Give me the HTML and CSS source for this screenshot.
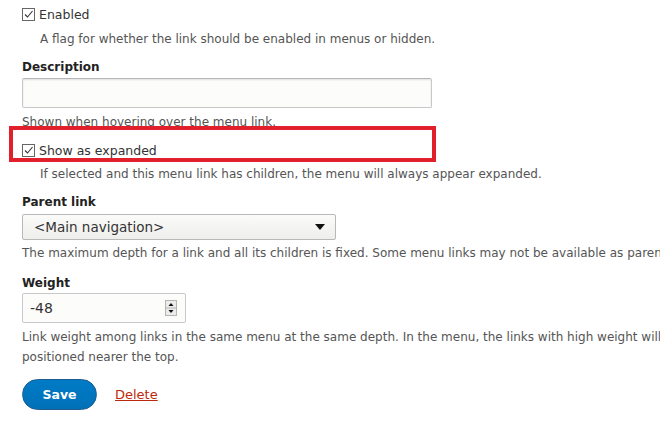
FILE: index.html
```html
<!DOCTYPE html>
<html>
<head>
<meta charset="utf-8">
<link rel="stylesheet" href="styles.css">
</head>
<body>
<form class="form">
  <div class="item item-check">
    <label class="check-row">
      <svg class="checkbox" width="13" height="13" viewBox="0 0 13 13"><rect x="0.5" y="0.5" width="12" height="12" fill="#fff" stroke="#666"/><path d="M3 6.5 L5.5 9 L10.5 3" fill="none" stroke="#333" stroke-width="1.1"/></svg>
      <span>Enabled</span>
    </label>
    <div class="desc desc-indent desc-first">A flag for whether the link should be enabled in menus or hidden.</div>
  </div>

  <div class="item item-desc">
    <div class="label">Description</div>
    <div class="text-input"></div>
    <div class="desc desc-tight">Shown when hovering over the menu link.</div>
  </div>

  <div class="item item-check item-expanded">
    <label class="check-row">
      <svg class="checkbox" width="13" height="13" viewBox="0 0 13 13"><rect x="0.5" y="0.5" width="12" height="12" fill="#fff" stroke="#666"/><path d="M3 6.5 L5.5 9 L10.5 3" fill="none" stroke="#333" stroke-width="1.1"/></svg>
      <span>Show as expanded</span>
    </label>
    <div class="desc desc-indent desc-expanded">If selected and this menu link has children, the menu will always appear expanded.</div>
    <div class="highlight"></div>
  </div>

  <div class="item item-parent">
    <div class="label">Parent link</div>
    <div class="select">
      <span>&lt;Main navigation&gt;</span>
      <svg class="arrow" width="10" height="6" viewBox="0 0 10 6"><path d="M0 0 H10 L5 6 Z" fill="#111"/></svg>
    </div>
    <div class="desc desc-parent">The maximum depth for a link and all its children is fixed. Some menu links may not be available as parents if selecting them would exceed this limit.</div>
  </div>

  <div class="item item-weight">
    <div class="label">Weight</div>
    <div class="number">
      <span>-48</span>
      <span class="spinner">
        <svg width="12" height="16" viewBox="0 0 12 16"><rect x="0.5" y="0.5" width="11" height="15" fill="#ececec" stroke="#b5b5b5"/><line x1="1" y1="8" x2="11" y2="8" stroke="#b5b5b5"/><path d="M3.5 6 H8.5 L6 3 Z" fill="#111"/><path d="M3.5 10 H8.5 L6 13 Z" fill="#111"/></svg>
      </span>
    </div>
    <div class="desc desc-weight">Link weight among links in the same menu at the same depth. In the menu, the links with high weight will be positioned nearer the top.</div>
  </div>

  <div class="actions">
    <button type="button" class="btn-save">Save</button>
    <a class="delete" href="#">Delete</a>
  </div>
</form>
</body>
</html>
```
FILE: styles.css
```css
html, body {
  margin: 0;
  padding: 0;
  background: #fff;
  overflow: hidden;
}
body {
  font-family: "DejaVu Sans", Verdana, sans-serif;
  color: #333;
  width: 660px;
  height: 427px;
}
.form {
  padding-left: 22px;
  width: 700px;
}
.item {
  margin: 0;
}
.check-row {
  display: flex;
  align-items: center;
  gap: 4px;
  height: 20px;
  margin-top: 4px;
  font-size: 12.5px;
  color: #333;
}
.checkbox {
  display: block;
  flex: none;
}
.desc {
  font-size: 12px;
  line-height: 18px;
  color: #555;
  white-space: nowrap;
}
.desc-indent {
  padding-left: 18px;
}
.desc-first {
  margin-top: 6px;
}
.label {
  font-size: 12px;
  font-weight: bold;
  line-height: 18px;
  color: #222;
}
.item-desc {
  margin-top: 10px;
}
.text-input {
  width: 408px;
  height: 28px;
  border: 1px solid #c8c8c8;
  border-top-color: #b6b6b6;
  border-radius: 2px;
  background: #fcfcfa;
  margin-top: 2px;
  box-shadow: inset 0 1px 2px rgba(0,0,0,0.12);
}
.desc-tight {
  margin-top: 5px;
}
.item-expanded {
  position: relative;
  margin-top: 9px;
}
.item-expanded .check-row {
  margin-top: 0;
}
.desc-expanded {
  margin-top: 5px;
}
.highlight {
  position: absolute;
  left: -13px;
  top: -14px;
  width: 419px;
  height: 28px;
  border: 4px solid #e2202b;
}
.item-parent {
  margin-top: 10px;
}
.select {
  display: flex;
  align-items: center;
  justify-content: space-between;
  margin-top: 3px;
  padding: 0 10px 0 11px;
  box-sizing: border-box;
  width: 314px;
  height: 26px;
  border: 1px solid #b8b8b8;
  border-radius: 2px;
  background: linear-gradient(#fbfbfa, #eeeeeb);
  font-size: 13.5px;
  color: #333;
}
.arrow {
  display: block;
}
.desc-parent {
  margin-top: 4px;
}
.item-weight {
  margin-top: 12px;
}
.number {
  display: flex;
  align-items: center;
  justify-content: space-between;
  box-sizing: border-box;
  width: 164px;
  height: 30px;
  margin-top: 1px;
  padding: 0 8px 0 7px;
  border: 1px solid #c8c8c8;
  border-radius: 2px;
  background: #fcfcfa;
  font-size: 14px;
  color: #333;
}
.spinner svg {
  display: block;
}
.desc-weight {
  margin-top: 4px;
  line-height: 20px;
  white-space: normal;
  width: 690px;
}
.actions {
  display: flex;
  align-items: center;
  gap: 18px;
  margin-top: 12px;
}
.btn-save {
  width: 75px;
  height: 31px;
  border: 1px solid #1e5c90;
  border-radius: 16px;
  background: linear-gradient(#007bc6, #0071b8);
  color: #fff;
  font-family: "DejaVu Sans", Verdana, sans-serif;
  font-weight: bold;
  font-size: 12.5px;
  padding: 0;
}
.delete {
  color: #bc2a0d;
  font-size: 13px;
  text-decoration: underline;
}
```
